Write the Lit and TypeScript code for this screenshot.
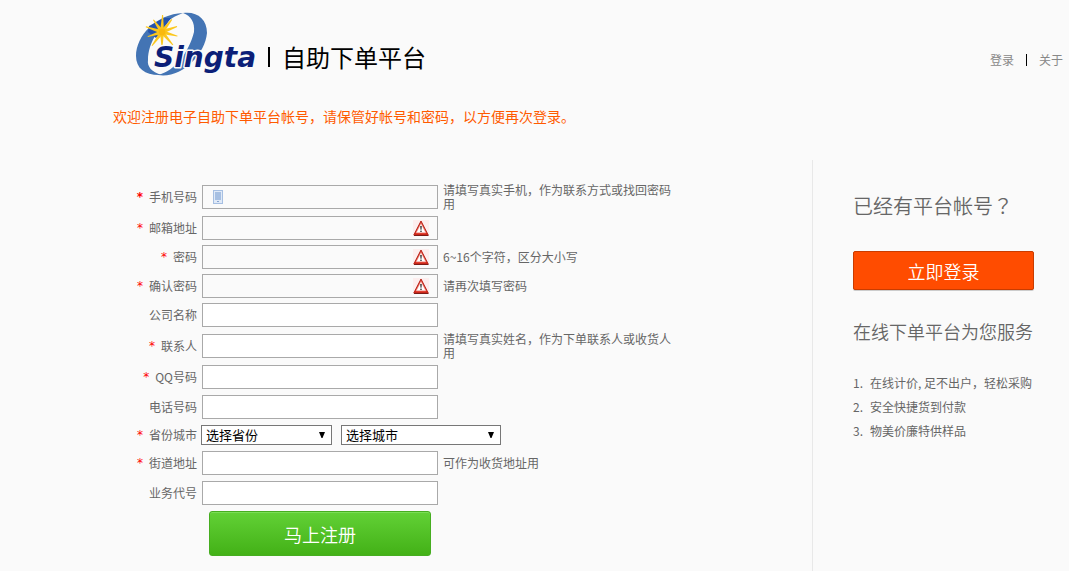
import { LitElement, html, css, svg, nothing } from "lit";
import { customElement, property } from "lit/decorators.js";

type Field = {
  id: string;
  label: string;
  required?: boolean;
  strong?: boolean;
  type?: string;
  icon?: "phone" | "warn";
  hint?: string;
  size?: "tall" | "mid";
};

const topFields: Field[] = [
  { id: "mobile", label: "手机号码", required: true, strong: true, icon: "phone", type: "tel", hint: "请填写真实手机，作为联系方式或找回密码用", size: "tall" },
  { id: "email", label: "邮箱地址", required: true, icon: "warn" },
  { id: "password", label: "密码", required: true, icon: "warn", type: "password", hint: "6~16个字符，区分大小写" },
  { id: "confirm", label: "确认密码", required: true, icon: "warn", type: "password", hint: "请再次填写密码" },
  { id: "company", label: "公司名称" },
  { id: "contact", label: "联系人", required: true, hint: "请填写真实姓名，作为下单联系人或收货人用", size: "tall" },
  { id: "qq", label: "QQ号码", required: true },
  { id: "phone", label: "电话号码", type: "tel", size: "mid" },
];

const bottomFields: Field[] = [
  { id: "street", label: "街道地址", required: true, hint: "可作为收货地址用", size: "mid" },
  { id: "agent", label: "业务代号" },
];

const services = ["在线计价, 足不出户，轻松采购", "安全快捷货到付款", "物美价廉特供样品"];

const rays = [
  [2, 17], [38, 16], [70, 16], [105, 16], [140, 17],
  [180, 15], [216, 17], [252, 15], [288, 17], [325, 15],
];

@customElement("brand-logo")
class BrandLogo extends LitElement {
  static styles = css`
    :host { display: block; }
    .mark { display: block; overflow: visible; }
    .word {
      font: italic bold 28px "DejaVu Sans", sans-serif;
      fill: #0c1f78;
      stroke: #fafafa;
      stroke-width: 3px;
      stroke-linejoin: round;
      paint-order: stroke;
    }
  `;
  render() {
    return html`<svg class="mark" width="120" height="64" viewBox="0 0 120 64" role="img" aria-label="Singta">
      <path fill="#4374b4" d="M47 1C20 2 0 24 0 44C0 57 10 64 26 63C15 60 11 54 12 48C12 31 24 9 47 1Z" />
      <path fill="#4374b4" d="M47 1C61-1 71 7 71 21C69 43 45 67 22 63C39 59 53 40 58 20C59 10 55 4 47 1Z" />
      <path fill="#2453ae" d="M13 14L28 6L35 6L28 16L20 26L12 20Z" />
      ${rays.map(([a, l]) => svg`<path fill="#fbc71d" transform=${`translate(26 20) rotate(${a})`} d=${`M-1.800-2L-.5-${l}H.5L1.800-2Z`} />`)}
      <circle cx="26" cy="20" r="3.400" fill="#f9b90e" />
      <text class="word" x="18" y="55">Singta</text>
    </svg>`;
  }
}

@customElement("form-row")
class FormRow extends LitElement {
  @property({ attribute: false }) field!: Field;

  static styles = css`
    :host { display: block; }
    .row { display: flex; align-items: center; gap: 5px; min-height: 27px; }
    .tall { min-height: 31px; }
    .mid { min-height: 29px; }
    .label { flex: 0 0 84px; display: flex; justify-content: flex-end; gap: 6px; white-space: nowrap; }
    .star { color: #f00; font-family: "DejaVu Sans", sans-serif; font-style: italic; }
    .upright { font-style: normal; font-weight: bold; }
    .box {
      box-sizing: border-box; flex: 0 0 236px; height: 24px; display: flex; align-items: center;
      padding: 0 8px 0 10px; gap: 8px; border: 1px solid #a9a9a9; background: #fff;
    }
    .flagged { background: #fafafa; }
    .input { flex: 1; min-width: 0; border: 0; padding: 0; background: none; outline: none; font: inherit; color: #000; }
    .hint { flex: 0 1 232px; line-height: 14px; }
    .icon { flex: none; display: block; }
  `;

  render() {
    const f = this.field;
    return html`<div class="row ${f.size ?? ""}">
      <label class="label" for=${f.id}>
        ${f.required ? html`<span class="star ${f.strong ? "upright" : ""}">*</span>` : nothing}
        <span>${f.label}</span>
      </label>
      <div class="box ${f.icon ? "flagged" : ""}">
        ${f.icon === "phone"
          ? html`<svg class="icon" width="11" height="14" viewBox="0 0 11 14">
              <rect x=".5" y=".5" width="9" height="13" fill="#dfe9f7" stroke="#a6bfe2" />
              <rect x="2" y="2" width="6" height="8" fill="#a6bfe2" />
              <rect x="4" y="11" width="2" height="1" fill="#87a5d2" />
            </svg>`
          : nothing}
        <input class="input" id=${f.id} type=${f.type ?? "text"} />
        ${f.icon === "warn"
          ? html`<svg class="icon" width="16" height="16" viewBox="0 0 16 16">
              <rect width="16" height="16" fill="#fdeeee" />
              <path d="M8 1L15.200 15H.8Z" fill="#dc2a1a" stroke="#b8261c" stroke-width="1" stroke-linejoin="round" />
              <path d="M8 3.500L12.800 12.800H3.200Z" fill="#fff" stroke="#f3b0a8" stroke-width=".6" />
              <path d="M7.200 6H8.800L8.500 9.800H7.500Z" fill="#333" />
              <rect x="7.300" y="10.600" width="1.400" height="1.400" fill="#333" />
              <path d="M1 15.500H15.500" stroke="#7d1b16" />
            </svg>`
          : nothing}
      </div>
      ${f.hint ? html`<span class="hint">${f.hint}</span>` : nothing}
    </div>`;
  }
}

@customElement("app-root")
class AppRoot extends LitElement {
  static styles = css`
    :host {
      display: flex; flex-direction: column; min-height: 100vh; background: #fafafa; color: #666;
      font: 12px/14px "Noto Sans CJK SC", sans-serif;
    }
    .header { display: flex; justify-content: space-between; padding: 12px 6px 0 136px; }
    .brand { display: flex; gap: 12px; }
    .title { margin: 0; padding-top: 30px; display: flex; align-items: center; gap: 12px; height: 30px; font-size: 24px; line-height: 30px; font-weight: 400; color: #000; }
    .bar { width: 2px; height: 20px; background: #000; }
    .nav { display: flex; align-items: center; gap: 12px; padding-top: 32px; }
    .nav .bar { width: 1px; height: 12px; }
    .link { color: #888; text-decoration: none; }
    .intro { margin: 30px 0 34px 113px; font-size: 14px; line-height: 20px; color: #ff5a00; }
    .main { flex: 1; display: grid; grid-template-columns: minmax(0, 1fr) 257px; }
    .form { display: flex; flex-direction: column; gap: 2px; padding: 21px 0 15px 113px; }
    .region { display: flex; align-items: center; min-height: 23px; }
    .region .label { width: 84px; display: flex; justify-content: flex-end; gap: 6px; margin-right: 4px; }
    .star { color: #f00; font-family: "DejaVu Sans", sans-serif; font-style: italic; }
    .pick { position: relative; margin-right: 9px; }
    .select {
      display: block; box-sizing: border-box; width: 131px; height: 20px; padding: 0 20px 0 4px;
      appearance: none; border: 1px solid #777; border-radius: 0; background: #fff; color: #000;
      font: 13px/18px "Noto Sans CJK SC", sans-serif;
    }
    .city { width: 160px; }
    .arrow { position: absolute; right: 6px; top: 7px; pointer-events: none; }
    .submit {
      width: 222px; height: 45px; margin: 3px 0 0 96px; padding: 0; border: 1px solid #46ad20; border-radius: 3px;
      background: linear-gradient(#62d136, #43b117); color: #fff;
      font: 350 18px/24px "Noto Sans CJK SC", sans-serif; box-shadow: inset 0 1px #7ade56;
    }
    .side { border-left: 1px solid #e8e8e8; padding: 33px 35px 0 40px; }
    .ask { margin: 0; font: 350 20px/26px "Noto Sans CJK TC", sans-serif; white-space: nowrap; }
    .login {
      display: block; width: 100%; height: 39px; margin: 32px 0 28px; padding: 0; border: 1px solid #c93c00; border-radius: 2px;
      background: #ff4c00; color: #fff; font: 350 18px/24px "Noto Sans CJK SC", sans-serif; box-shadow: 0 1px #ccc;
    }
    .serve { margin: 0; font-size: 18px; line-height: 26px; font-weight: 350; white-space: nowrap; }
    .list { margin: 27px 0 0; padding: 0; list-style: none; counter-reset: n; line-height: 24px; white-space: nowrap; }
    .item { display: flex; counter-increment: n; }
    .item::before { content: counter(n) "."; width: 17px; }
  `;

  private arrow() {
    return html`<svg class="arrow" width="8" height="6" viewBox="0 0 8 6"><path d="M1 0H7L4.500 6H3.500Z" fill="#000" /></svg>`;
  }

  render() {
    return html`
      <header class="header">
        <div class="brand">
          <brand-logo></brand-logo>
          <h1 class="title"><span class="bar"></span>自助下单平台</h1>
        </div>
        <nav class="nav">
          <a class="link" href="#login">登录</a><span class="bar"></span><a class="link" href="#about">关于</a>
        </nav>
      </header>
      <p class="intro">欢迎注册电子自助下单平台帐号，请保管好帐号和密码，以方便再次登录。</p>
      <main class="main">
        <form class="form">
          ${topFields.map((f) => html`<form-row .field=${f}></form-row>`)}
          <div class="region">
            <label class="label" for="province"><span class="star">*</span><span>省份城市</span></label>
            <div class="pick">
              <select class="select" id="province"><option>选择省份</option></select>${this.arrow()}
            </div>
            <div class="pick">
              <select class="select city" aria-label="城市"><option>选择城市</option></select>${this.arrow()}
            </div>
          </div>
          ${bottomFields.map((f) => html`<form-row .field=${f}></form-row>`)}
          <button class="submit" type="button">马上注册</button>
        </form>
        <aside class="side">
          <h2 class="ask">已经有平台帐号？</h2>
          <button class="login" type="button">立即登录</button>
          <h2 class="serve">在线下单平台为您服务</h2>
          <ol class="list">${services.map((s) => html`<li class="item">${s}</li>`)}</ol>
        </aside>
      </main>
    `;
  }
}
